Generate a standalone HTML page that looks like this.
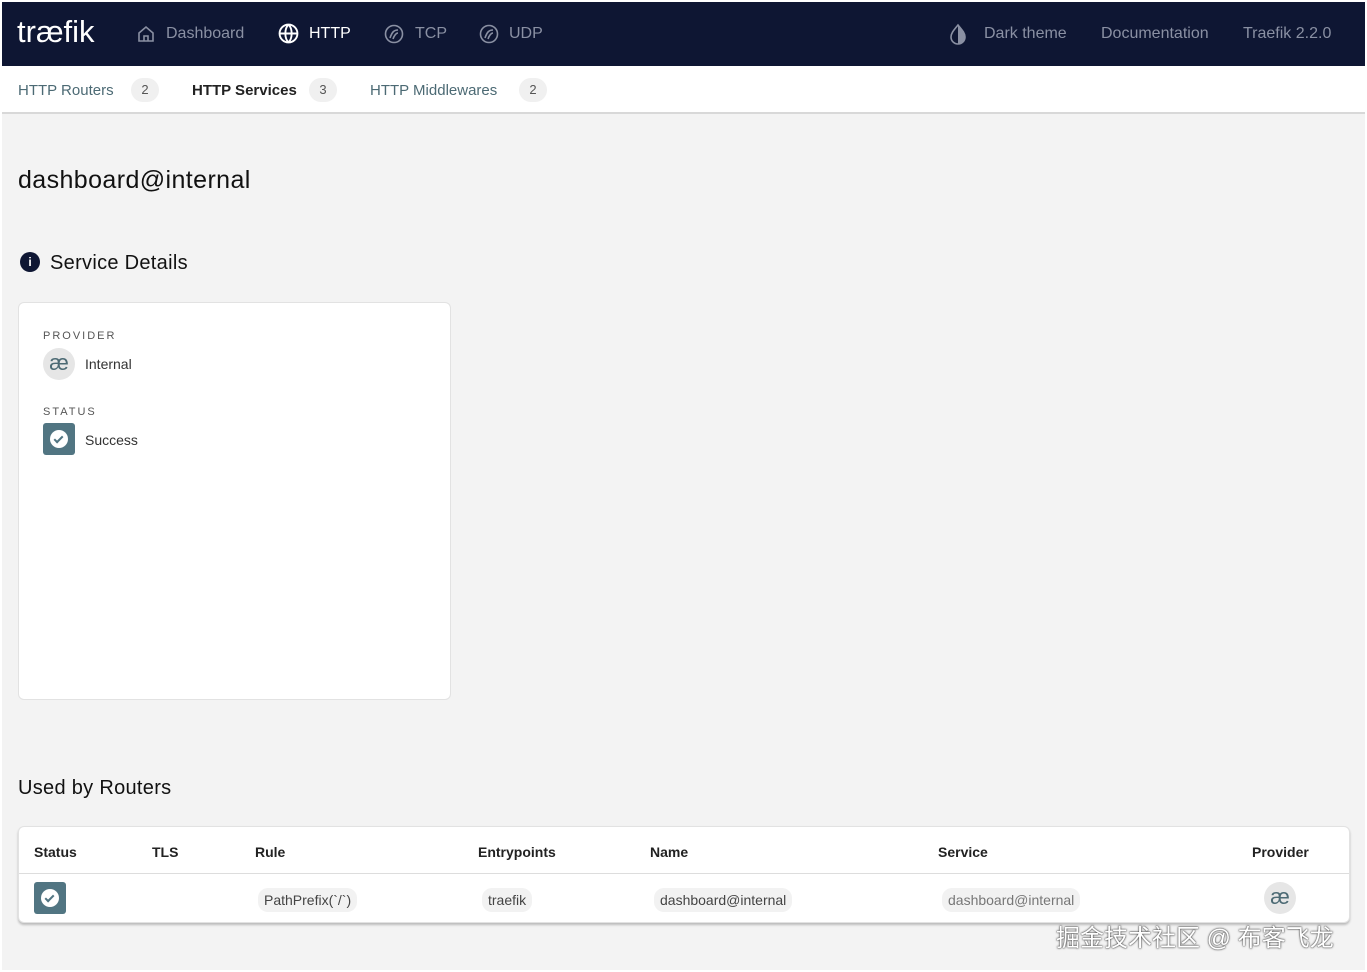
<!DOCTYPE html>
<html><head><meta charset="utf-8"><style>
*{box-sizing:border-box;margin:0;padding:0}
i{font-style:normal}
body{width:1367px;height:972px;overflow:hidden;background:#fff;font-family:"Liberation Sans","Noto Sans CJK SC",sans-serif;position:relative}
#wrap{position:absolute;left:2px;top:2px;width:1363px;height:968px;background:#f3f3f3}
.nav{position:absolute;left:0;top:0;width:1363px;height:64px;background:#0e1633;color:#8a90a3;font-size:16px}
.nav span{position:absolute;top:23px}
.logo{position:absolute;left:15px;top:12px;color:#fff;font-size:31px}
.sub{position:absolute;left:0;top:64px;width:1363px;height:48px;background:#fff;border-bottom:2px solid #d8d8d8;font-size:15px;color:#4c6a74}
.sub span{position:absolute;top:16px}
.badge{display:inline-block;width:28px;height:24px;border-radius:12px;background:#f0f0f0;text-align:center;line-height:24px;font-size:13px;color:#555;position:absolute;top:12px}
.card{position:absolute;background:#fff;border:1px solid #e2e2e2;border-radius:6px}
.lbl{position:absolute;font-size:11px;letter-spacing:2px;color:#555}
.ae{position:absolute;width:32px;height:32px;border-radius:50%;background:#e6e6e6;color:#4c6a74;text-align:center;line-height:30px;font-size:22px}
.chk{position:absolute;width:32px;height:32px;border-radius:3px;background:#517582}
.chk:after{content:"";position:absolute;left:7px;top:7px;width:18px;height:18px;border-radius:50%;background:#fff}
.chk i{position:absolute;left:13px;top:11px;width:5px;height:9px;border:solid #517582;border-width:0 2px 2px 0;transform:rotate(45deg);z-index:2}
.th{position:absolute;top:842px;font-size:14px;font-weight:bold;color:#222}
.pill{position:absolute;top:886px;height:24px;line-height:24px;padding:0 6px;border-radius:10px;background:#f2f2f2;font-size:14px;color:#444}
</style></head><body><div id="wrap">
<div class="nav">
<div class="logo">tr<span style="position:static">æ</span>fik</div>
<svg style="position:absolute;left:134px;top:22px" width="20" height="20" viewBox="0 0 20 20" fill="none" stroke="#8a90a3" stroke-width="1.6"><path d="M3 9L10 3l7 6v8H3z"/><path d="M8 17v-5h4v5"/></svg>
<span style="left:164px">Dashboard</span>
<svg style="position:absolute;left:276px;top:21px" width="21" height="21" viewBox="0 0 20 20" fill="none" stroke="#fff" stroke-width="1.8"><circle cx="10" cy="10" r="8.5"/><path d="M1.5 10h17M10 1.5c-4 4-4 13 0 17M10 1.5c4 4 4 13 0 17"/></svg>
<span style="left:307px;color:#fff">HTTP</span>
<svg style="position:absolute;left:382px;top:22px" width="20" height="20" viewBox="0 0 20 20" fill="none" stroke="#8a90a3" stroke-width="1.6"><circle cx="10" cy="10" r="8.5"/><path d="M6 14c2-6 4-8 8-8M9 15c1-3 3-6 5-6"/></svg>
<span style="left:413px">TCP</span>
<svg style="position:absolute;left:477px;top:22px" width="20" height="20" viewBox="0 0 20 20" fill="none" stroke="#8a90a3" stroke-width="1.6"><circle cx="10" cy="10" r="8.5"/><path d="M6 14c2-6 4-8 8-8M9 15c1-3 3-6 5-6"/></svg>
<span style="left:507px">UDP</span>
<svg style="position:absolute;left:946px;top:21px" width="20" height="22" viewBox="0 0 20 22"><path d="M10 2C6 7 3 10 3 14a7 7 0 0014 0c0-4-3-7-7-12z" fill="none" stroke="#8a90a3" stroke-width="1.6"/><path d="M10 2v19a7 7 0 007-7c0-4-3-7-7-12z" fill="#8a90a3"/></svg>
<span style="left:982px">Dark theme</span>
<span style="left:1099px">Documentation</span>
<span style="left:1241px">Traefik 2.2.0</span>
</div>
<div class="sub">
<span style="left:16px">HTTP Routers</span><i class="badge" style="left:129px">2</i>
<span style="left:190px;color:#222;font-weight:bold">HTTP Services</span><i class="badge" style="left:307px">3</i>
<span style="left:368px">HTTP Middlewares</span><i class="badge" style="left:517px">2</i>
</div>
<div style="position:absolute;left:16px;top:164px;font-size:25px;color:#111;letter-spacing:0.4px">dashboard@internal</div>
<div style="position:absolute;left:18px;top:250px;width:20px;height:20px;border-radius:50%;background:#0e1633;color:#fff;font-size:12px;font-weight:bold;text-align:center;line-height:20px">i</div>
<div style="position:absolute;left:48px;top:250px;font-size:20px;color:#111;letter-spacing:0.3px">Service Details</div>
<div class="card" style="left:16px;top:300px;width:433px;height:398px">
<div class="lbl" style="left:24px;top:27px">PROVIDER</div>
<div class="ae" style="left:24px;top:45px">æ</div>
<div style="position:absolute;left:66px;top:53px;font-size:14px;color:#333">Internal</div>
<div class="lbl" style="left:24px;top:103px">STATUS</div>
<div class="chk" style="left:24px;top:120px"><i></i></div>
<div style="position:absolute;left:66px;top:129px;font-size:14px;color:#333">Success</div>
</div>
<div style="position:absolute;left:16px;top:775px;font-size:20px;color:#111;letter-spacing:0.3px">Used by Routers</div>
<div class="card" style="left:16px;top:824px;width:1332px;height:97px;box-shadow:0 2px 2px #bbb"></div>
<div style="position:absolute;left:17px;top:871px;width:1330px;height:1px;background:#ddd"></div>
<div class="th" style="left:32px">Status</div><div class="th" style="left:150px">TLS</div><div class="th" style="left:253px">Rule</div><div class="th" style="left:476px">Entrypoints</div><div class="th" style="left:648px">Name</div><div class="th" style="left:936px">Service</div><div class="th" style="left:1250px">Provider</div>
<div class="chk" style="left:32px;top:880px"><i></i></div>
<div class="pill" style="left:256px">PathPrefix(`/`)</div>
<div class="pill" style="left:480px">traefik</div>
<div class="pill" style="left:652px">dashboard@internal</div>
<div class="pill" style="left:940px;color:#777">dashboard@internal</div>
<div class="ae" style="left:1262px;top:880px">æ</div>
<div style="position:absolute;left:1054px;top:916px;font-size:24px;color:#fff;text-shadow:0 0 2px #333,0 0 1px #333">掘金技术社区 @ 布客飞龙</div>
</div></body></html>
